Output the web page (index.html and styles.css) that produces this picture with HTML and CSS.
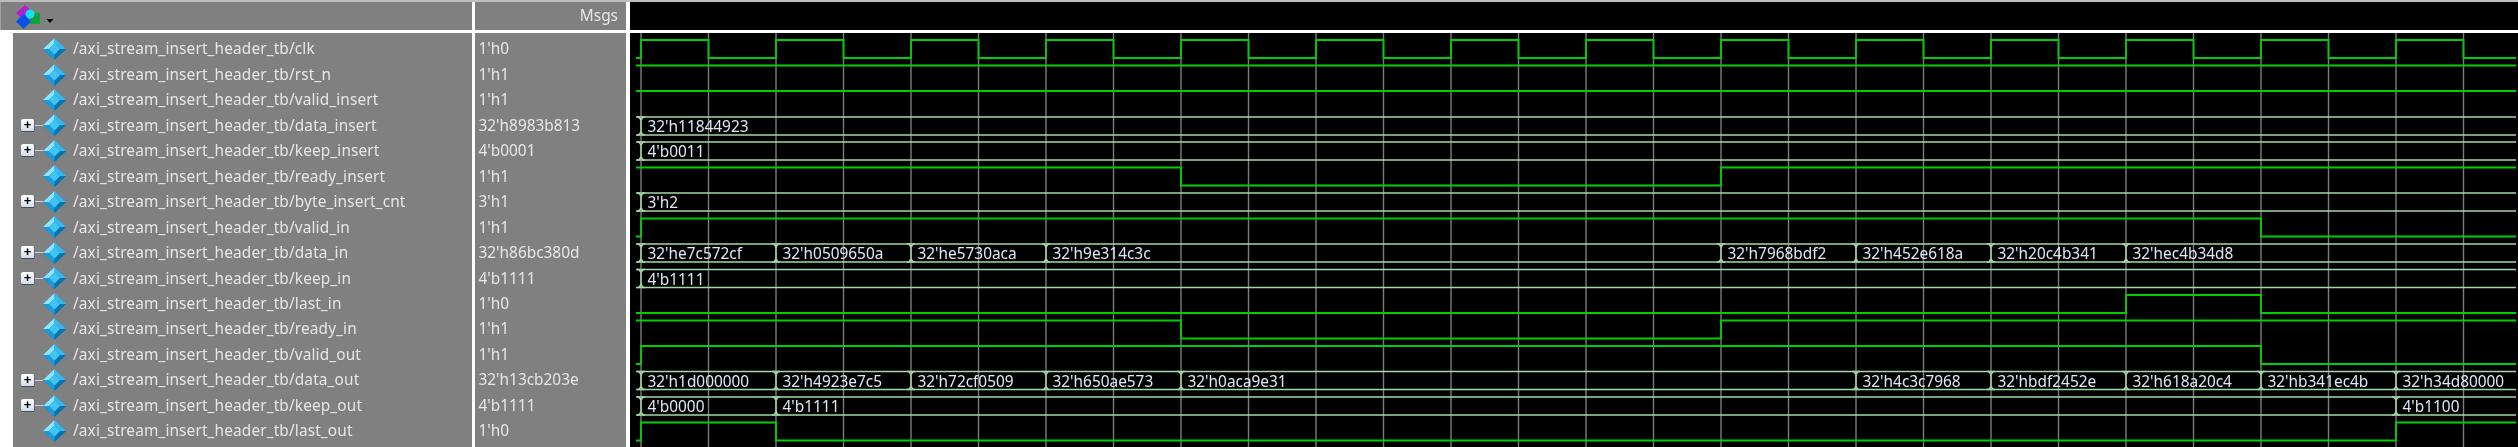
FILE: index.html
```html
<!DOCTYPE html>
<html lang="en">
<head>
<meta charset="utf-8">
<title>Wave</title>
<link rel="stylesheet" href="styles.css">
</head>
<body>
<svg class="defs" width="0" height="0" aria-hidden="true">
  <defs>
    <symbol id="dia" viewBox="0 0 23 22">
      <polygon points="11.5,0 23,11 11.5,22 0,11" fill="#0d8fd0"/>
      <polygon points="11.5,0 0,11 6,11 11.5,5.5" fill="#8fe4ff"/>
      <polygon points="11.5,0 23,11 17,11 11.5,5.5" fill="#38b8ea"/>
      <polygon points="0,11 11.5,22 11.5,16.5 6,11" fill="#1a9ad8"/>
      <polygon points="23,11 11.5,22 11.5,16.5 17,11" fill="#0674ae"/>
      <polygon points="11.5,5.5 17,11 11.5,16.5 6,11" fill="#3fc4f4"/>
    </symbol>
  </defs>
</svg>
<div class="app">
  <div class="head names-head">
    <svg class="tool" width="42" height="26" viewBox="0 0 42 26" aria-hidden="true">
      <polygon points="3,9 12,1 21,9 12,17" fill="#b020d0"/>
      <rect x="17" y="9" width="10" height="11" fill="#10a040"/>
      <polygon points="3,17.5 10.5,10 18,17.5 10.5,25" fill="#0a50e8"/>
      <circle cx="17" cy="10" r="4.5" fill="#10e0f0"/>
      <polygon points="33.5,15 40.5,15 37,19" fill="#000"/>
    </svg>
  </div>
  <div class="head vals-head">Msgs</div>
  <div class="head wave-head"></div>

  <div class="names">
    <div class="row"><span class="tree"></span><svg class="dia"><use href="#dia"/></svg><span class="nm">/axi_stream_insert_header_tb/clk</span></div>
    <div class="row"><span class="tree"></span><svg class="dia"><use href="#dia"/></svg><span class="nm">/axi_stream_insert_header_tb/rst_n</span></div>
    <div class="row"><span class="tree"></span><svg class="dia"><use href="#dia"/></svg><span class="nm">/axi_stream_insert_header_tb/valid_insert</span></div>
    <div class="row"><span class="tree"><i class="box">+</i><i class="stem"></i></span><svg class="dia"><use href="#dia"/></svg><span class="nm">/axi_stream_insert_header_tb/data_insert</span></div>
    <div class="row"><span class="tree"><i class="box">+</i><i class="stem"></i></span><svg class="dia"><use href="#dia"/></svg><span class="nm">/axi_stream_insert_header_tb/keep_insert</span></div>
    <div class="row"><span class="tree"></span><svg class="dia"><use href="#dia"/></svg><span class="nm">/axi_stream_insert_header_tb/ready_insert</span></div>
    <div class="row"><span class="tree"><i class="box">+</i><i class="stem"></i></span><svg class="dia"><use href="#dia"/></svg><span class="nm">/axi_stream_insert_header_tb/byte_insert_cnt</span></div>
    <div class="row"><span class="tree"></span><svg class="dia"><use href="#dia"/></svg><span class="nm">/axi_stream_insert_header_tb/valid_in</span></div>
    <div class="row"><span class="tree"><i class="box">+</i><i class="stem"></i></span><svg class="dia"><use href="#dia"/></svg><span class="nm">/axi_stream_insert_header_tb/data_in</span></div>
    <div class="row"><span class="tree"><i class="box">+</i><i class="stem"></i></span><svg class="dia"><use href="#dia"/></svg><span class="nm">/axi_stream_insert_header_tb/keep_in</span></div>
    <div class="row"><span class="tree"></span><svg class="dia"><use href="#dia"/></svg><span class="nm">/axi_stream_insert_header_tb/last_in</span></div>
    <div class="row"><span class="tree"></span><svg class="dia"><use href="#dia"/></svg><span class="nm">/axi_stream_insert_header_tb/ready_in</span></div>
    <div class="row"><span class="tree"></span><svg class="dia"><use href="#dia"/></svg><span class="nm">/axi_stream_insert_header_tb/valid_out</span></div>
    <div class="row"><span class="tree"><i class="box">+</i><i class="stem"></i></span><svg class="dia"><use href="#dia"/></svg><span class="nm">/axi_stream_insert_header_tb/data_out</span></div>
    <div class="row"><span class="tree"><i class="box">+</i><i class="stem"></i></span><svg class="dia"><use href="#dia"/></svg><span class="nm">/axi_stream_insert_header_tb/keep_out</span></div>
    <div class="row"><span class="tree"></span><svg class="dia"><use href="#dia"/></svg><span class="nm">/axi_stream_insert_header_tb/last_out</span></div>
  </div>

  <div class="vals">
    <div class="row">1'h0</div>
    <div class="row">1'h1</div>
    <div class="row">1'h1</div>
    <div class="row">32'h8983b813</div>
    <div class="row">4'b0001</div>
    <div class="row">1'h1</div>
    <div class="row">3'h1</div>
    <div class="row">1'h1</div>
    <div class="row">32'h86bc380d</div>
    <div class="row">4'b1111</div>
    <div class="row">1'h0</div>
    <div class="row">1'h1</div>
    <div class="row">1'h1</div>
    <div class="row">32'h13cb203e</div>
    <div class="row">4'b1111</div>
    <div class="row">1'h0</div>
  </div>

  <div class="wave">
    <svg class="plot" width="1888" height="414" viewBox="630 33 1888 414" aria-hidden="false">
      <defs>
        <path id="tr" d="M-4 0H-2L0 3V15L-2 18H-4M4 0H2L0 3M0 15L2 18H4"/>
      </defs>
      <path class="grid" d="M641 33V447M708.5 33V447M776 33V447M843.5 33V447M911 33V447M978.5 33V447M1046 33V447M1113.5 33V447M1181 33V447M1248.5 33V447M1316 33V447M1383.5 33V447M1451 33V447M1518.5 33V447M1586 33V447M1653.5 33V447M1721 33V447M1788.5 33V447M1856 33V447M1923.5 33V447M1991 33V447M2058.5 33V447M2126 33V447M2193.5 33V447M2261 33V447M2328.5 33V447M2396 33V447M2463.5 33V447"/>

      <path class="bit" d="M636 58H641V40h67.5v18h67.5v-18h67.5v18h67.5v-18h67.5v18h67.5v-18h67.5v18h67.5v-18h67.5v18h67.5v-18h67.5v18h67.5v-18h67.5v18h67.5v-18h67.5v18h67.5v-18h67.5v18h67.5v-18h67.5v18h67.5v-18h67.5v18h67.5v-18h67.5v18h67.5v-18h67.5v18h67.5v-18h67.5v18H2516"/>
      <path class="bit" d="M636 65.5H2516M636 91H2516"/>
      <path class="bit" d="M636 167.5H1181V185.5H1721V167.5H2516"/>
      <path class="bit" d="M636 236.5H641V218.5H2261V236.5H2516"/>
      <path class="bit" d="M636 313H2126V295H2261V313H2516"/>
      <path class="bit" d="M636 320.5H1181V338.5H1721V320.5H2516"/>
      <path class="bit" d="M636 364H641V346H2261V364H2516"/>
      <path class="bit" d="M636 440.5H641V422.5H776V440.5H2396V422.5H2516"/>

      <path class="bus" d="M636 117H2516M636 135H2516M636 142H2516M636 160H2516M636 193H2516M636 211H2516M636 244H2516M636 262H2516M636 269.5H2516M636 287.5H2516M636 371.5H2516M636 389.5H2516M636 397H2516M636 415H2516"/>
      <g class="bus">
        <use href="#tr" x="641" y="117"/>
        <use href="#tr" x="641" y="142"/>
        <use href="#tr" x="641" y="193"/>
        <use href="#tr" x="641" y="244"/>
        <use href="#tr" x="776" y="244"/>
        <use href="#tr" x="911" y="244"/>
        <use href="#tr" x="1046" y="244"/>
        <use href="#tr" x="1721" y="244"/>
        <use href="#tr" x="1856" y="244"/>
        <use href="#tr" x="1991" y="244"/>
        <use href="#tr" x="2126" y="244"/>
        <use href="#tr" x="641" y="269.5"/>
        <use href="#tr" x="641" y="371.5"/>
        <use href="#tr" x="776" y="371.5"/>
        <use href="#tr" x="911" y="371.5"/>
        <use href="#tr" x="1046" y="371.5"/>
        <use href="#tr" x="1181" y="371.5"/>
        <use href="#tr" x="1856" y="371.5"/>
        <use href="#tr" x="1991" y="371.5"/>
        <use href="#tr" x="2126" y="371.5"/>
        <use href="#tr" x="2261" y="371.5"/>
        <use href="#tr" x="2396" y="371.5"/>
        <use href="#tr" x="641" y="397"/>
        <use href="#tr" x="776" y="397"/>
        <use href="#tr" x="2396" y="397"/>
      </g>

      <g class="lbl">
        <text x="647.5" y="132">32'h11844923</text>
        <text x="647.5" y="157">4'b0011</text>
        <text x="647.5" y="208">3'h2</text>
        <text x="647.5" y="259">32'he7c572cf</text>
        <text x="782.5" y="259">32'h0509650a</text>
        <text x="917.5" y="259">32'he5730aca</text>
        <text x="1052.5" y="259">32'h9e314c3c</text>
        <text x="1727.5" y="259">32'h7968bdf2</text>
        <text x="1862.5" y="259">32'h452e618a</text>
        <text x="1997.5" y="259">32'h20c4b341</text>
        <text x="2132.5" y="259">32'hec4b34d8</text>
        <text x="647.5" y="284.5">4'b1111</text>
        <text x="647.5" y="386.5">32'h1d000000</text>
        <text x="782.5" y="386.5">32'h4923e7c5</text>
        <text x="917.5" y="386.5">32'h72cf0509</text>
        <text x="1052.5" y="386.5">32'h650ae573</text>
        <text x="1187.5" y="386.5">32'h0aca9e31</text>
        <text x="1862.5" y="386.5">32'h4c3c7968</text>
        <text x="1997.5" y="386.5">32'hbdf2452e</text>
        <text x="2132.5" y="386.5">32'h618a20c4</text>
        <text x="2267.5" y="386.5">32'hb341ec4b</text>
        <text x="2402.5" y="386.5">32'h34d80000</text>
        <text x="647.5" y="412">4'b0000</text>
        <text x="782.5" y="412">4'b1111</text>
        <text x="2402.5" y="412">4'b1100</text>
      </g>
    </svg>
  </div>
</div>
</body>
</html>
```
FILE: styles.css
```css
* { box-sizing: border-box; }
html, body { margin: 0; padding: 0; background: #fff; }
.defs { position: absolute; }
.app {
  width: 2518px;
  height: 447px;
  overflow: hidden;
  display: grid;
  grid-template-columns: 472px 154px 1fr;
  grid-template-rows: 28px 1fr;
  row-gap: 3px;
  border-top: 2px solid #bdbdbd;
  background: #fff;
  font: 15.4px/1 "Noto Sans", Arial, sans-serif;
  color: #e6e6e6;
  filter: blur(0.35px);
}
.head { background: #808080; }
.names-head { padding: 2px 0 0 12px; border-left: 1px solid #a0a0a0; }
.tool { display: block; }
.vals-head {
  border-left: 3px solid #fff;
  text-align: right;
  padding: 6px 8px 0 0;
}
.wave-head { background: #000; border-left: 4px solid #fff; }
.names {
  background: #808080;
  border-left: 13px solid #fff;
  padding: 3.3px 0 0 8px;
}
.nm { letter-spacing: 0.13px; }
.vals {
  background: #808080;
  border-left: 3px solid #fff;
  padding: 3.3px 0 0 3.5px;
}
.row {
  height: 25.48px;
  display: flex;
  align-items: center;
  white-space: nowrap;
}
.tree { width: 22px; display: flex; align-items: center; flex: none; }
.box {
  width: 14px;
  height: 13px;
  flex: none;
  background: linear-gradient(#fff, #d4dcec);
  border-bottom: 1px solid #444c60;
  border-right: 1px solid #606878;
  border-radius: 2px;
  color: #000;
  font: bold 13px/11px "Liberation Sans", Arial, sans-serif;
  text-align: center;
}
.stem { flex: 1; height: 1px; background: #d0d0d0; }
.dia { width: 23px; height: 22px; margin-right: 7px; flex: none; }
.wave { background: #000; border-left: 4px solid #fff; }
.plot { display: block; }
.grid { stroke: #7c7c7c; stroke-width: 1.4; fill: none; }
.bit { stroke: #00d000; stroke-width: 1.8; fill: none; }
.bus { stroke: #a4d8a4; stroke-width: 1.5; fill: none; }
.lbl text { fill: #dfe8f4; font: 15.4px "Noto Sans", Arial, sans-serif; }
```
